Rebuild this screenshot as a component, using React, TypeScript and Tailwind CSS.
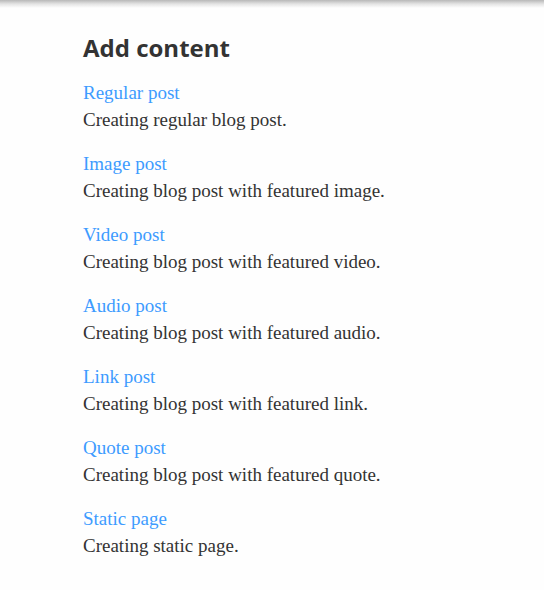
const items = [
  { title: "Regular post", text: "Creating regular blog post." },
  { title: "Image post", text: "Creating blog post with featured image." },
  { title: "Video post", text: "Creating blog post with featured video." },
  { title: "Audio post", text: "Creating blog post with featured audio." },
  { title: "Link post", text: "Creating blog post with featured link." },
  { title: "Quote post", text: "Creating blog post with featured quote." },
  { title: "Static page", text: "Creating static page." },
];

export default function App() {
  return (
    <div className="min-h-[590px] w-[544px] bg-[#fefefe]">
      <div className="h-2 bg-gradient-to-b from-[#b8b8b8] via-[#e4e4e4] to-[#fefefe]" />
      <div className="pl-[83px] pt-[24px]">
        <h1 className="font-['Open_Sans',sans-serif] text-[24px] font-bold leading-[32px] text-[#333]">
          Add content
        </h1>
        <ul className="mt-[15px] font-['Liberation_Serif',serif] text-[19px] leading-[27px]">
          {items.map((item) => (
            <li key={item.title} className="mb-[17px]">
              <a href="#" className="block text-[#3d9bff]">
                {item.title}
              </a>
              <p className="text-[#333]">{item.text}</p>
            </li>
          ))}
        </ul>
      </div>
    </div>
  );
}
